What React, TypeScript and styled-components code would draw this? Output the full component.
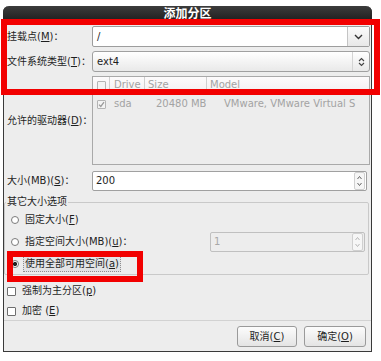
import React from "react";
import styled, { createGlobalStyle } from "styled-components";

const GlobalStyle = createGlobalStyle`
  html, body {
    margin: 0;
    padding: 0;
    background: #ffffff;
  }
  body {
    font-family: "DejaVu Sans", "Noto Sans CJK SC", sans-serif;
    font-size: 10px;
    line-height: 12px;
    color: #1e1e1e;
  }
`;

const Page = styled.div`
  position: relative;
  width: 381px;
  height: 361px;
  overflow: hidden;
`;

const Window = styled.div`
  margin: 6px 0 0 3px;
  width: 369px;
  height: 346px;
  box-sizing: border-box;
  display: flex;
  flex-direction: column;
  background: #ededed;
  border: 1px solid #3a3a3a;
  border-top: none;
  border-radius: 6px 6px 0 0;
`;

const TitleBar = styled.div`
  height: 16px;
  margin: 0 -1px;
  display: flex;
  align-items: center;
  justify-content: center;
  background: linear-gradient(#3c3c3c, #1f1f1f);
  border-radius: 6px 6px 0 0;
  color: #ffffff;
  font-weight: bold;
  font-size: 12px;
`;

const Body = styled.div`
  flex: 1;
  display: flex;
  flex-direction: column;
  padding: 5px 1px 0 3px;
`;

const FieldRow = styled.div<{ $mt?: number }>`
  display: grid;
  grid-template-columns: 85px 1fr;
  align-items: center;
  margin-top: ${(p) => p.$mt ?? 0}px;
`;

const Label = styled.span`
  white-space: nowrap;
`;

const Key = styled.span`
  text-decoration: underline;
`;

const Combo = styled.div`
  height: 21px;
  box-sizing: border-box;
  display: flex;
  background: #ffffff;
  border: 1px solid #9d9d9d;
  border-radius: 2px;
`;

const ComboText = styled.span`
  flex: 1;
  padding-left: 4px;
  align-self: center;
`;

const ComboButton = styled.span`
  width: 21px;
  display: flex;
  align-items: center;
  justify-content: center;
  border-left: 1px solid #c4c4c4;
  background: linear-gradient(#fbfbfb, #e8e8e8);
`;

const Select = styled.div`
  height: 21px;
  box-sizing: border-box;
  display: flex;
  align-items: center;
  background: linear-gradient(#ffffff, #e9e9e9);
  border: 1px solid #a0a0a0;
  border-radius: 3px;
`;

const SelectText = styled.span`
  flex: 1;
  padding-left: 4px;
`;

const SelectArrow = styled.span`
  width: 16px;
  height: 100%;
  display: flex;
  align-items: center;
  justify-content: center;
  border-left: 1px solid #d4d4d4;
`;

const DriveList = styled.div`
  height: 89px;
  box-sizing: border-box;
  border: 1px solid #a9a9a9;
  background: #ededed;
  color: #a3a3a3;
  overflow: hidden;
`;

const TableRow = styled.div<{ $head?: boolean }>`
  display: grid;
  grid-template-columns: 16px 35px 62px 1fr;
  align-items: center;
  height: ${(p) => (p.$head ? 16 : 20)}px;
  background: ${(p) => (p.$head ? "linear-gradient(#fdfbfc, #f2eff1)" : "transparent")};
  border-bottom: ${(p) => (p.$head ? "1px solid #dcdcdc" : "none")};
`;

const Cell = styled.span<{ $sep?: boolean; $pl?: number }>`
  display: flex;
  align-items: center;
  height: 100%;
  padding-left: ${(p) => p.$pl ?? 0}px;
  box-sizing: border-box;
  white-space: nowrap;
  overflow: hidden;
  border-left: ${(p) => (p.$sep ? "1px solid #cfcfcf" : "none")};
`;

const Box = styled.span<{ $gray?: boolean }>`
  width: 9px;
  height: 9px;
  box-sizing: border-box;
  display: inline-flex;
  align-items: center;
  justify-content: center;
  flex: none;
  background: ${(p) => (p.$gray ? "#f3f3f3" : "#ffffff")};
  border: 1px solid ${(p) => (p.$gray ? "#b4b4b4" : "#6e6e6e")};
  border-radius: 1px;
`;

const SpinInput = styled.div<{ $disabled?: boolean }>`
  height: 20px;
  box-sizing: border-box;
  display: flex;
  align-items: center;
  background: ${(p) => (p.$disabled ? "#ededed" : "#ffffff")};
  border: 1px solid ${(p) => (p.$disabled ? "#c0c0c0" : "#a0a0a0")};
  border-radius: 2px;
  color: ${(p) => (p.$disabled ? "#a8a8a8" : "inherit")};
`;

const SpinText = styled.span`
  flex: 1;
  padding-left: 3px;
`;

const SpinButtons = styled.span`
  width: 9px;
  height: 16px;
  margin-right: 1px;
  display: flex;
  align-items: center;
  justify-content: center;
  border: 1px solid #d0d0d0;
  border-radius: 2px;
  background: #f6f6f6;
`;

const Frame = styled.fieldset`
  margin: 5px 1px 0 -3px;
  padding: 2px 3px 0 1px;
  border: 1px solid #c9c9c9;
  border-radius: 2px;
  min-width: 0;
`;

const Legend = styled.legend`
  padding: 0 1px;
  line-height: 12px;
`;

const OptionRow = styled.div<{ $mt?: number }>`
  height: 20px;
  display: flex;
  align-items: center;
  margin-top: ${(p) => p.$mt ?? 0}px;
`;

const Radio = styled.span<{ $on?: boolean }>`
  width: 8px;
  height: 8px;
  margin: 0 6px 0 5px;
  box-sizing: border-box;
  flex: none;
  border-radius: 50%;
  border: 1px solid #7a7a7a;
  background: ${(p) =>
    p.$on ? "radial-gradient(circle, #222 0 1.8px, #fff 2.4px)" : "#ffffff"};
`;

const Focus = styled.span`
  padding: 1px 1px;
  margin-left: -2px;
  background: #e2e3e6;
  border: 1px dotted #8e8e8e;
`;

const CheckRow = styled.div<{ $mt?: number }>`
  height: 18px;
  display: flex;
  align-items: center;
  gap: 6px;
  margin-top: ${(p) => p.$mt ?? 0}px;
`;

const ActionArea = styled.div`
  margin: auto -1px 0 -3px;
  padding: 5px 5px 4px 0;
  display: flex;
  justify-content: flex-end;
  gap: 7px;
  border-top: 1px solid #d2d2d2;
`;

const Button = styled.button<{ $w: number }>`
  width: ${(p) => p.$w}px;
  height: 21px;
  padding: 0;
  font: inherit;
  color: inherit;
  background: linear-gradient(#fcfcfc, #e4e4e4);
  border: 1px solid #9a9a9a;
  border-radius: 3px;
`;

const Highlight = styled.div<{ $l: number; $t: number; $w: number; $h: number }>`
  position: absolute;
  left: ${(p) => p.$l}px;
  top: ${(p) => p.$t}px;
  width: ${(p) => p.$w}px;
  height: ${(p) => p.$h}px;
  box-sizing: border-box;
  border: 6px solid #f20000;
  pointer-events: none;
`;

const Check = ({ color }: { color: string }) => (
  <svg width="7" height="7" viewBox="0 0 7 7">
    <path d="M1 3.6 L2.8 5.4 L6 1.2" fill="none" stroke={color} strokeWidth="1.3" />
  </svg>
);

const SpinArrows = ({ color }: { color: string }) => (
  <svg width="5" height="12" viewBox="0 0 5 12">
    <path
      d="M0.5 4 L2.5 1.5 L4.5 4 M0.5 8 L2.5 10.5 L4.5 8"
      fill="none"
      stroke={color}
      strokeWidth="0.9"
    />
  </svg>
);

const App: React.FC = () => {
  return (
    <Page>
      <GlobalStyle />
      <Window>
        <TitleBar>添加分区</TitleBar>
        <Body>
          <FieldRow>
            <Label>
              挂载点(<Key>M</Key>)：
            </Label>
            <Combo>
              <ComboText>/</ComboText>
              <ComboButton>
                <svg width="9" height="6" viewBox="0 0 9 6">
                  <path d="M1 1 L4.5 4.5 L8 1" fill="none" stroke="#333" strokeWidth="1.4" />
                </svg>
              </ComboButton>
            </Combo>
          </FieldRow>

          <FieldRow $mt={4}>
            <Label>
              文件系统类型(<Key>T</Key>)：
            </Label>
            <Select>
              <SelectText>ext4</SelectText>
              <SelectArrow>
                <svg width="7" height="10" viewBox="0 0 7 10">
                  <path
                    d="M1 4 L3.5 1.5 L6 4 M1 6 L3.5 8.5 L6 6"
                    fill="none"
                    stroke="#444"
                    strokeWidth="1.1"
                  />
                </svg>
              </SelectArrow>
            </Select>
          </FieldRow>

          <FieldRow $mt={4}>
            <Label>
              允许的驱动器(<Key>D</Key>)：
            </Label>
            <DriveList>
              <TableRow $head>
                <Cell $pl={4}>
                  <Box $gray />
                </Cell>
                <Cell $sep $pl={4}>Drive</Cell>
                <Cell $sep $pl={3}>Size</Cell>
                <Cell $sep $pl={3}>Model</Cell>
              </TableRow>
              <TableRow>
                <Cell $pl={4}>
                  <Box $gray>
                    <Check color="#9a9a9a" />
                  </Box>
                </Cell>
                <Cell $pl={5}>sda</Cell>
                <Cell $pl={12}>20480 MB</Cell>
                <Cell $pl={18}>VMware, VMware Virtual S</Cell>
              </TableRow>
            </DriveList>
          </FieldRow>

          <FieldRow $mt={6}>
            <Label>
              大小(MB)(<Key>S</Key>)：
            </Label>
            <SpinInput style={{ marginRight: 3 }}>
              <SpinText>200</SpinText>
              <SpinButtons>
                <SpinArrows color="#555" />
              </SpinButtons>
            </SpinInput>
          </FieldRow>

          <Frame>
            <Legend>其它大小选项</Legend>
            <OptionRow>
              <Radio />
              <span>
                固定大小(<Key>F</Key>)
              </span>
            </OptionRow>
            <OptionRow $mt={2}>
              <Radio />
              <span>
                指定空间大小(MB)(<Key>u</Key>)：
              </span>
              <SpinInput $disabled style={{ marginLeft: "auto", width: 155 }}>
                <SpinText>1</SpinText>
                <SpinButtons>
                  <SpinArrows color="#b0b0b0" />
                </SpinButtons>
              </SpinInput>
            </OptionRow>
            <OptionRow $mt={2}>
              <Radio $on />
              <Focus>
                使用全部可用空间(<Key>a</Key>)
              </Focus>
            </OptionRow>
          </Frame>

          <CheckRow $mt={7}>
            <Box />
            <span>
              强制为主分区(<Key>p</Key>)
            </span>
          </CheckRow>
          <CheckRow $mt={2}>
            <Box />
            <span>
              加密 (<Key>E</Key>)
            </span>
          </CheckRow>

          <ActionArea>
            <Button $w={60}>
              取消(<Key>C</Key>)
            </Button>
            <Button $w={62}>
              确定(<Key>O</Key>)
            </Button>
          </ActionArea>
        </Body>
      </Window>

      <Highlight $l={1} $t={19} $w={379} $h={76} />
      <Highlight $l={7} $t={251} $w={136} $h={31} />
    </Page>
  );
};

export default App;
